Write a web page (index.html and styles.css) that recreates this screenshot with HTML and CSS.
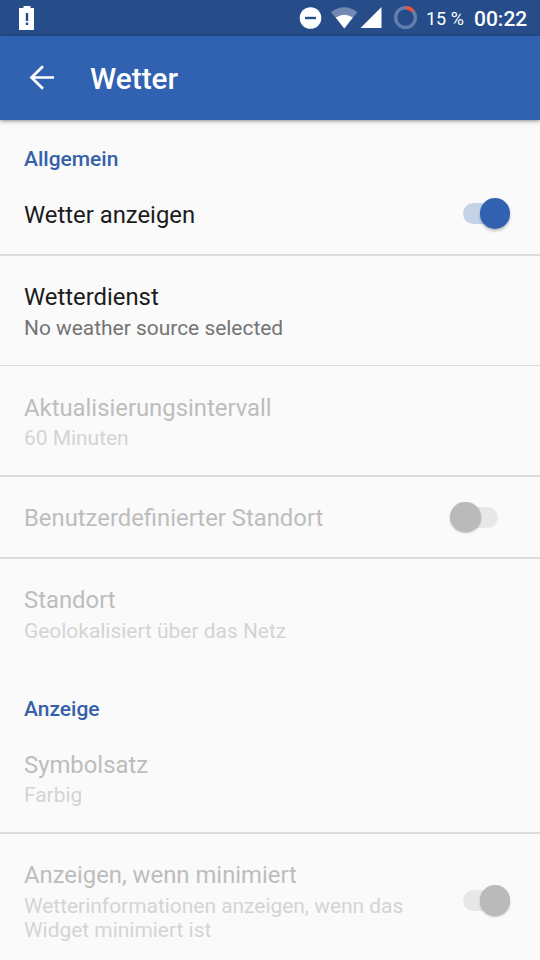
FILE: index.html
```html
<!DOCTYPE html>
<html lang="de">
<head>
<meta charset="utf-8">
<title>Wetter</title>
<link rel="stylesheet" href="styles.css">
</head>
<body>
<div class="statusbar">
  <svg class="battery-alert" width="16" height="24" viewBox="0 0 16 24"><path fill="#fff" d="M4.500 0h7v2H15v22H0V2h4.500z"/><path fill="#264d89" d="M6.800 7h2.400v8H6.800zM6.800 16.600h2.400V19H6.800z"/></svg>
  <svg class="status-icons" width="120" height="36" viewBox="0 0 120 36">
    <circle cx="12.500" cy="18" r="10.800" fill="#fff"/><path fill="#264d89" d="M7 16.800h11v2.400H7z"/>
    <path fill="#7189b3" d="M33 12.300Q46 2.300 59.500 12.300L46.300 28.500z"/>
    <path fill="#fff" d="M37.800 17.500Q46.300 12 54.800 17.500L46.300 28.500z"/>
    <path fill="#fff" d="M83.500 7v21H62.500z"/>
    <circle cx="107.500" cy="17.600" r="9.900" fill="none" stroke="#647eac" stroke-width="3.400"/>
    <path d="M107.500 7.700A9.900 9.900 0 0 1 115.300 11.500" fill="none" stroke="#e9563f" stroke-width="3.400"/>
  </svg>
  <span class="percent">15 %</span>
  <span class="clock">00:22</span>
</div>
<header class="appbar">
  <svg class="back" width="26" height="26" viewBox="0 0 26 26"><path d="M25 12.500H3M14 1.300L2.500 12.500L14 23.700" fill="none" stroke="#fff" stroke-width="2.700"/></svg>
  <h1 class="title">Wetter</h1>
</header>
<main>
  <h2 class="category">Allgemein</h2>
  <div class="row single">
    <div class="name">Wetter anzeigen</div>
    <div class="switch on"><div class="thumb"></div></div>
  </div>
  <div class="row thin">
    <div><div class="name">Wetterdienst</div><div class="summary">No weather source selected</div></div>
  </div>
  <div class="row tall shifted disabled">
    <div><div class="name">Aktualisierungsintervall</div><div class="summary">60 Minuten</div></div>
  </div>
  <div class="row single disabled">
    <div class="name">Benutzerdefinierter Standort</div>
    <div class="switch off"><div class="thumb"></div></div>
  </div>
  <div class="row tall last disabled">
    <div><div class="name">Standort</div><div class="summary">Geolokalisiert über das Netz</div></div>
  </div>
  <h2 class="category">Anzeige</h2>
  <div class="row compact disabled">
    <div><div class="name">Symbolsatz</div><div class="summary">Farbig</div></div>
  </div>
  <div class="row wrap last disabled">
    <div><div class="name">Anzeigen, wenn minimiert</div><div class="summary">Wetterinformationen anzeigen, wenn das Widget minimiert ist</div></div>
    <div class="switch on"><div class="thumb"></div></div>
  </div>
</main>
</body>
</html>
```
FILE: styles.css
```css
* { box-sizing: border-box; }
body {
  margin: 0;
  width: 540px;
  height: 960px;
  overflow: hidden;
  background: #fafafa;
  font-family: Roboto, sans-serif;
  color: #1c1c1c;
}
.statusbar {
  display: flex;
  align-items: center;
  height: 36px;
  padding: 0 12px 0 19px;
  background: #264d89;
  color: #fff;
}
.status-icons { margin-left: auto; }
.percent { width: 38px; margin-left: 8px; font-size: 18px; white-space: nowrap; }
.clock { width: 54px; margin: 2px 0 0 10px; font-size: 21px; font-weight: 500; white-space: nowrap; }
.appbar {
  display: flex;
  align-items: center;
  height: 84px;
  padding-left: 29px;
  background: #3161b1;
  color: #fff;
  box-shadow: 0 1px 4px rgba(0, 0, 0, .45);
}
.title { margin: 2px 0 0 35px; font-size: 29.800px; font-weight: 500; line-height: 36px; }
.category {
  height: 54px;
  margin: 0;
  padding: 27px 24px 0;
  color: #3461a8;
  font-size: 21px;
  font-weight: 500;
  line-height: 24px;
}
.row {
  display: flex;
  justify-content: space-between;
  height: 110px;
  padding: 25px 29.600px 0 24px;
  border-bottom: 2px solid #dcdcdc;
}
.single { height: 82px; }
.thin { border-bottom-width: 1px; }
.tall { height: 111px; }
.shifted { padding-top: 26px; }
.wrap { height: 126px; }
.last { border-bottom: 0; }
.name { font-size: 23.850px; line-height: 32px; }
.summary { width: 400px; margin-top: 3px; color: #747474; font-size: 20.930px; line-height: 24px; }
.shifted .summary, .compact .summary { margin-top: 2px; }
.disabled .name { color: #bdbdbd; }
.disabled .summary { color: #d4d4d4; }
.switch {
  flex: none;
  display: flex;
  align-items: center;
  width: 47.400px;
  height: 21px;
  margin-top: 4px;
  border-radius: 11px;
  background: #c5d3e8;
}
.thumb {
  width: 30.400px;
  height: 30.400px;
  border-radius: 50%;
  background: #3161b1;
  box-shadow: 0 2px 3px rgba(0, 0, 0, .25);
}
.on .thumb { margin-left: auto; }
.off { width: 48px; margin-right: 12px; }
.disabled .switch { margin-top: 4.500px; background: #e8e8e8; }
.disabled .thumb { background: #bababa; box-shadow: 0 1px 2px rgba(0, 0, 0, .25); }
.wrap.disabled .switch { margin-top: 31px; }
```
